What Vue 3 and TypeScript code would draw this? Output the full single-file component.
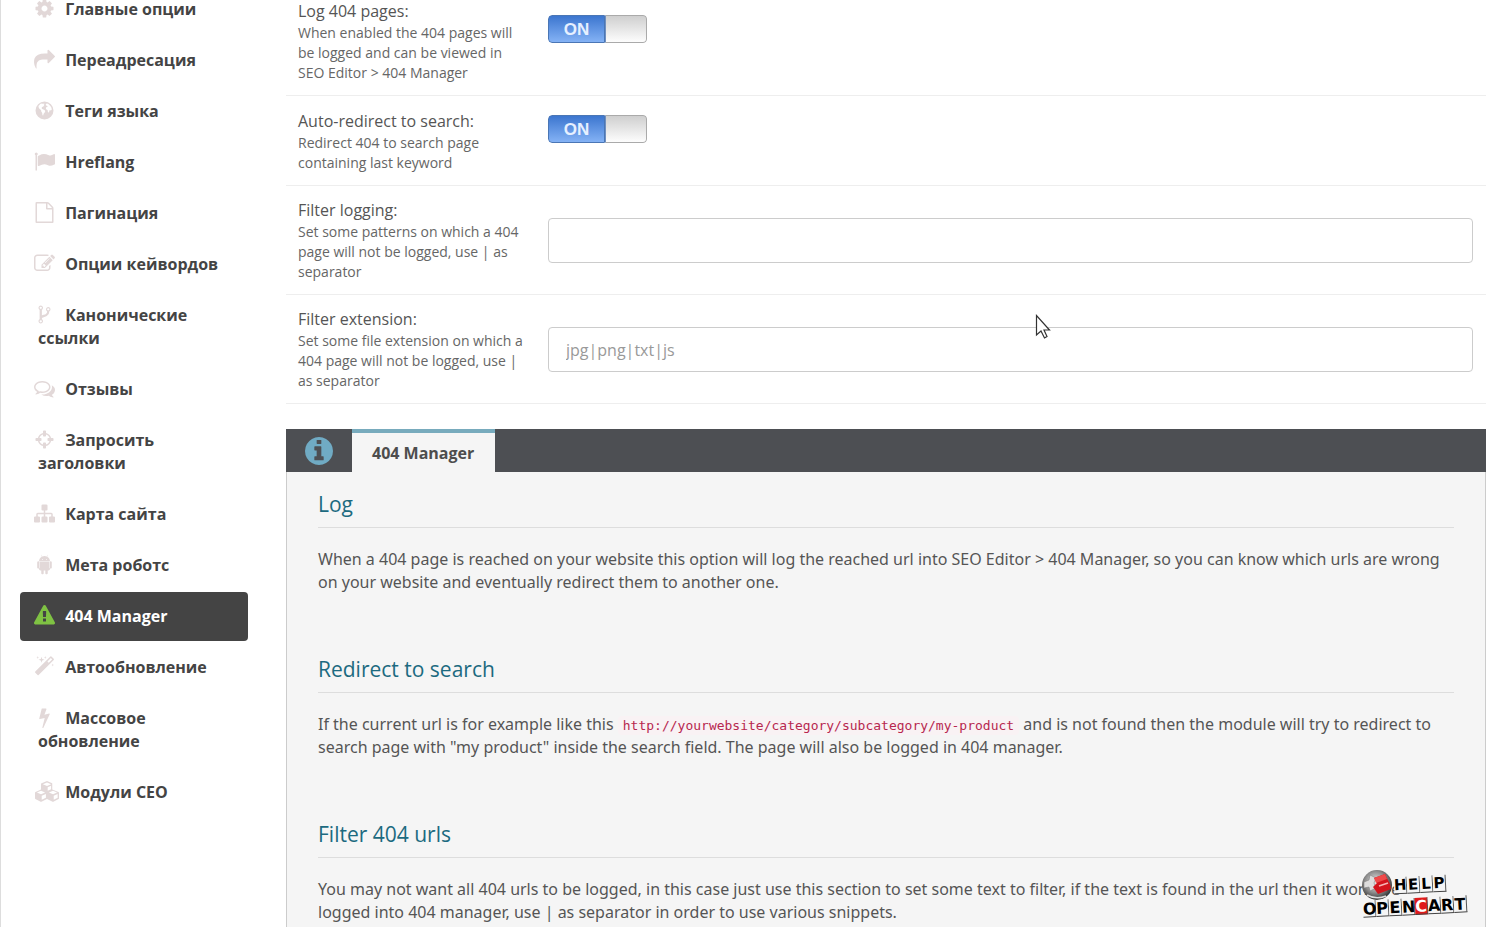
<script setup lang="ts">
import { ref } from 'vue'

interface NavItem {
  label: string
  icon: string
  wide?: boolean
  active?: boolean
}

const nav: NavItem[] = [
  { label: 'Главные опции', icon: 'M1152 896q0-106-75-181t-181-75-181 75-75 181 75 181 181 75 181-75 75-181zm512-109v222q0 12-8 23t-20 13l-185 28q-19 54-39 91 35 50 107 138 10 12 10 25t-9 23q-27 37-99 108t-94 71q-12 0-26-9l-138-108q-44 23-91 38-16 136-29 186-7 28-36 28h-222q-14 0-24.5-8.5t-11.5-21.5l-28-184q-49-16-90-37l-141 107q-10 9-25 9-14 0-25-11-126-114-165-168-7-10-7-23 0-12 8-23 15-21 51-66.5t54-70.5q-27-50-41-99l-183-27q-13-2-21-12.5t-8-23.5v-222q0-12 8-23t19-13l186-28q14-46 39-92-40-57-107-138-10-12-10-24 0-10 9-23 26-36 98.5-107.5t94.5-71.5q13 0 26 10l138 107q44-23 91-38 16-136 29-186 7-28 36-28h222q14 0 24.5 8.5t11.5 21.5l28 184q49 16 90 37l142-107q9-9 24-9 13 0 25 10 129 119 165 170 7 8 7 22 0 12-8 23-15 21-51 66.5t-54 70.5q26 50 41 98l183 28q13 2 21 12.5t8 23.5z' },
  { label: 'Переадресация', icon: 'M1792 640q0 26-19 45l-512 512q-19 19-45 19t-45-19-19-45v-256h-224q-98 0-175.5 6t-154 21.5-133 42.5-105.5 69.5-80 101-48.5 138.5-17.5 181q0 55 5 123 0 6 2.5 23.5t2.5 26.5q0 15-8.5 25t-23.5 10q-16 0-28-17-7-9-13-22t-13.5-30-10.5-24q-127-285-127-451 0-199 53-333 162-403 875-403h224v-256q0-26 19-45t45-19 45 19l512 512q19 19 19 45z' },
  { label: 'Теги языка', icon: 'M896 128a768 768 0 1 0 0 1536a768 768 0 1 0 0-1536zM560 330L700 300L760 350L850 290L900 340L820 420L880 470L790 560L700 600L640 680L700 760L800 800L900 860L960 960L900 1080L820 1180L780 1330L720 1300L700 1100L620 980L600 860L480 760L400 640L380 520zM1080 300L1200 330L1380 480L1480 640L1520 800L1440 900L1340 860L1300 980L1240 1080L1180 1000L1160 860L1060 820L1010 720L1060 600L1180 560L1120 480L1020 460L1000 380z' },
  { label: 'Hreflang', icon: 'M320 256q0 72-64 110v1266q0 13-9.5 22.5t-22.5 9.5h-64q-13 0-22.5-9.5t-9.5-22.5v-1266q-64-38-64-110 0-53 37.5-90.5t90.5-37.5 90.5 37.5 37.5 90.5zm1472 64v763q0 25-12.5 38.5t-39.5 27.5q-215 116-369 116-61 0-123.5-22t-108.5-48-115.5-48-142.5-22q-192 0-464 146-17 9-33 9-26 0-45-19t-19-45v-742q0-32 31-55 21-14 79-43 236-120 421-120 107 0 200 29t219 88q38 19 88 19 54 0 117.5-21t110-47 88-47 54.5-21q26 0 45 19t19 45z' },
  { label: 'Пагинация', icon: 'M1596 380q28 28 48 76t20 88v1152q0 40-28 68t-68 28h-1344q-40 0-68-28t-28-68v-1600q0-40 28-68t68-28h896q40 0 88 20t76 48zm-444-244v376h376q-10-29-22-41l-313-313q-12-12-41-22zm384 1528v-1024h-416q-40 0-68-28t-28-68v-416h-768v1536h1280z' },
  { label: 'Опции кейвордов', icon: 'M888 1184l116-116-152-152-116 116v56h96v96h56zm440-720q-16-16-33 1l-350 350q-17 17-1 33t33-1l350-350q17-17 1-33zm80 594v190q0 119-84.5 203.5t-203.5 84.5h-832q-119 0-203.5-84.5t-84.5-203.5v-832q0-119 84.5-203.5t203.5-84.5h832q63 0 117 25 15 7 18 23 3 17-9 29l-49 49q-14 14-32 8-23-6-45-6h-832q-66 0-113 47t-47 113v832q0 66 47 113t113 47h832q66 0 113-47t47-113v-126q0-13 9-22l64-64q15-15 35-7t20 29zm-96-738l288 288-672 672h-288v-288zm444 132l-92 92-288-288 92-92q28-28 68-28t68 28l152 152q28 28 28 68t-28 68z' },
  { label: 'Канонические ссылки', icon: 'M672 1472q0-40-28-68t-68-28-68 28-28 68 28 68 68 28 68-28 28-68zm0-1152q0-40-28-68t-68-28-68 28-28 68 28 68 68 28 68-28 28-68zm640 128q0-40-28-68t-68-28-68 28-28 68 28 68 68 28 68-28 28-68zm96 0q0 52-26 96.5t-70 69.5q-2 287-226 414-67 38-203 81-128 40-169.5 71t-41.5 100v26q44 25 70 69.5t26 96.5q0 80-56 136t-136 56-136-56-56-136q0-52 26-96.5t70-69.5v-820q-44-25-70-69.5t-26-96.5q0-80 56-136t136-56 136 56 56 136q0 52-26 96.5t-70 69.5v497q54-26 154-57 55-17 87.5-29.5t70.5-31 59-39.5 40.5-51 28-69.5 8.5-91.5q-44-25-70-69.5t-26-96.5q0-80 56-136t136-56 136 56 56 136z' },
  { label: 'Отзывы', icon: 'M704 384q-153 0-286 52t-211.5 141-78.5 191q0 82 53 158t149 132l97 56-35 84q34-20 62-39l44-31 53 10q78 14 153 14 153 0 286-52t211.5-141 78.5-191-78.5-191-211.5-141-286-52zm0-128q191 0 353.5 68.5t256.5 186.5 94 257-94 257-256.5 186.5-353.5 68.5q-86 0-176-16-124 88-278 128-36 9-86 16h-3q-11 0-20.5-8t-11.5-21q-1-3-1-6.5t.5-6.5 2-6l2.5-5t3.5-5.5 4-5 4.5-5 4-4.5q5-6 23-25t26-29.5 22.5-29 25-38.5 20.5-44q-124-72-195-177t-71-224q0-139 94-257t256.5-186.5 353.5-68.5zm822 1169q10 24 20.5 44t25 38.5 22.5 29 26 29.5 23 25q1 1 4 4.5t4.5 5 4 5 3.5 5.5l2.5 5t2 6 .5 6.5-1 6.5q-3 14-13 22t-22 7q-50-7-86-16-154-40-278-128-90 16-176 16-271 0-472-132 58 4 88 4 161 0 309-45t264-129q125-92 192-212t67-254q0-77-23-152 129 71 204 178t75 230q0 120-71 224.5t-195 176.5z' },
  { label: 'Запросить заголовки', icon: 'M1325 1024h-109q-26 0-45-19t-19-45v-128q0-26 19-45t45-19h109q-32-108-112.5-188.5t-188.5-112.5v109q0 26-19 45t-45 19h-128q-26 0-45-19t-19-45v-109q-108 32-188.5 112.5t-112.5 188.5h109q26 0 45 19t19 45v128q0 26-19 45t-45 19h-109q32 108 112.5 188.5t188.5 112.5v-109q0-26 19-45t45-19h128q26 0 45 19t19 45v109q108-32 188.5-112.5t112.5-188.5zm339-192v128q0 26-19 45t-45 19h-143q-37 161-154.5 278.5t-278.5 154.5v143q0 26-19 45t-45 19h-128q-26 0-45-19t-19-45v-143q-161-37-278.5-154.5t-154.5-278.5h-143q-26 0-45-19t-19-45v-128q0-26 19-45t45-19h143q37-161 154.5-278.5t278.5-154.5v-143q0-26 19-45t45-19h128q26 0 45 19t19 45v143q161 37 278.5 154.5t154.5 278.5h143q26 0 45 19t19 45z' },
  { label: 'Карта сайта', icon: 'M1792 1248v320q0 40-28 68t-68 28h-320q-40 0-68-28t-28-68v-320q0-40 28-68t68-28h96v-192h-512v192h96q40 0 68 28t28 68v320q0 40-28 68t-68 28h-320q-40 0-68-28t-28-68v-320q0-40 28-68t68-28h96v-192h-512v192h96q40 0 68 28t28 68v320q0 40-28 68t-68 28h-320q-40 0-68-28t-28-68v-320q0-40 28-68t68-28h96v-192q0-52 38-90t90-38h512v-192h-96q-40 0-68-28t-28-68v-320q0-40 28-68t68-28h320q40 0 68 28t28 68v320q0 40-28 68t-68 28h-96v192h512q52 0 90 38t38 90v192h96q40 0 68 28t28 68z' },
  { label: 'Мета роботс', icon: 'M717 499q16 0 27.5-11.5t11.5-27.5-11.5-27.5-27.5-11.5-27 11.5-11 27.5 11 27.5 27 11.5zm358 0q16 0 27-11.5t11-27.5-11-27.5-27-11.5-27.5 11.5-11.5 27.5 11.5 27.5 27.5 11.5zm-699 112q42 0 72 30t30 72v430q0 43-29.5 73t-72.5 30-73-30-30-73v-430q0-42 30-72t73-30zm979 19v666q0 46-32 78t-77 32h-75v227q0 43-30 73t-73 30-73-30-30-73v-227h-138v227q0 43-30 73t-73 30q-42 0-72-30t-30-73l-1-227h-74q-46 0-78-32t-32-78v-666h918zm-232-405q107 55 171 153.5t64 215.5h-925q0-117 64-215.5t172-153.5l-71-131q-7-13 5-20 13-6 20 6l72 132q95-42 201-42t201 42l72-132q7-12 20-6 12 7 5 20zm395 488v430q0 43-30 73t-73 30q-42 0-72-30t-30-73v-430q0-43 30-72.5t72-29.5q43 0 73 29.5t30 72.5z' },
  { label: '404 Manager', active: true, icon: 'M1024 1375v-190q0-14-9.5-23.5t-22.5-9.5h-192q-13 0-22.5 9.5t-9.5 23.5v190q0 14 9.5 23.5t22.5 9.5h192q13 0 22.5-9.5t9.5-23.5zm-2-374l18-459q0-12-10-19-13-11-24-11h-220q-11 0-24 11-10 7-10 21l17 457q0 10 10 16.5t24 6.5h185q14 0 23.5-6.5t10.5-16.5zm-14-934l768 1408q35 63-2 126-17 29-46.5 46t-63.5 17h-1536q-34 0-63.5-17t-46.5-46q-37-63-2-126l768-1408q17-31 47-49t65-18 65 18 47 49z' },
  { label: 'Автообновление', icon: 'M1254 581l293-293-107-107-293 293zm447-293q0 27-18 45l-1286 1286q-18 18-45 18t-45-18l-198-198q-18-18-18-45t18-45l1286-1286q18-18 45-18t45 18l198 198q18 18 18 45zm-1351-190l98 30-98 30-30 98-30-98-98-30 98-30 30-98zm350 162l196 60-196 60-60 196-60-196-196-60 196-60 60-196zm930 478l98 30-98 30-30 98-30-98-98-30 98-30 30-98zm-640-640l98 30-98 30-30 98-30-98-98-30 98-30 30-98z' },
  { label: 'Массовое обновление', icon: 'M1333 566q18 20 7 44l-540 1157q-13 25-42 25-4 0-14-2-17-5-25.5-19t-4.5-30l197-808-406 101q-4 1-12 1-18 0-31-11-18-15-13-39l201-825q4-14 16-23t28-9h328q19 0 32 12.5t13 29.5q0 8-5 18l-171 463 396-98q8-2 12-2 19 0 34 15z' },
  { label: 'Модули СЕО', wide: true, icon: 'M1152 0L1600 190V720L2130 940Q2176 960 2176 1010V1480Q2176 1520 2140 1540L1690 1770Q1664 1785 1630 1770L1152 1540L674 1770Q640 1785 610 1770L160 1540Q128 1520 128 1480V1010Q128 960 170 940L640 720V260Q640 210 690 190zM1152 130L800 280L1152 430L1504 280zM1210 540V830L1500 700V410zM640 840L290 990L640 1140L990 990zM700 1250V1600L1060 1420V1100zM1664 840L1314 990L1664 1140L2014 990zM1724 1250V1600L2060 1430V1100z' },
]

const infoIcon = 'M1152 1376v-160q0-14-9-23t-23-9h-96v-512q0-14-9-23t-23-9h-320q-14 0-23 9t-9 23v160q0 14 9 23t23 9h96v320h-96q-14 0-23 9t-9 23v160q0 14 9 23t23 9h448q14 0 23-9t9-23zm-128-896v-160q0-14-9-23t-23-9h-192q-14 0-23 9t-9 23v160q0 14 9 23t23 9h192q14 0 23-9t9-23zm640 416q0 209-103 385.5t-279.5 279.5-385.5 103-385.5-103-279.5-279.5-103-385.5 103-385.5 279.5-279.5 385.5-103 385.5 103 279.5 279.5 103 385.5z'

const logPages = ref(true)
const autoRedirect = ref(true)
const filterLogging = ref('')
const filterExtension = ref('')
</script>

<template>
  <div class="page">
    <nav class="sidebar">
      <ul>
        <li v-for="item in nav" :key="item.label">
          <a href="#" :class="{ active: item.active }">
            <svg :class="['icon', { wide: item.wide }]" :viewBox="item.wide ? '128 0 2048 1792' : '0 0 1792 1792'" aria-hidden="true">
              <path :d="item.icon" fill-rule="evenodd" />
            </svg>
            {{ item.label }}
          </a>
        </li>
      </ul>
    </nav>

    <main class="content">
      <form class="options" @submit.prevent>
        <div class="row toggle-row">
          <label for="log-pages">Log 404 pages:<small>When enabled the 404 pages will be logged and can be viewed in SEO Editor &gt; 404 Manager</small></label>
          <div class="switch">
            <input id="log-pages" v-model="logPages" type="checkbox" />
            <span class="on">ON</span><span class="handle"></span>
          </div>
        </div>
        <div class="row toggle-row">
          <label for="auto-redirect">Auto-redirect to search:<small>Redirect 404 to search page containing last keyword</small></label>
          <div class="switch">
            <input id="auto-redirect" v-model="autoRedirect" type="checkbox" />
            <span class="on">ON</span><span class="handle"></span>
          </div>
        </div>
        <div class="row">
          <label for="filter-logging">Filter logging:<small>Set some patterns on which a 404 page will not be logged, use | as separator</small></label>
          <input id="filter-logging" v-model="filterLogging" class="field" type="text" />
        </div>
        <div class="row">
          <label for="filter-extension">Filter extension:<small>Set some file extension on which a 404 page will not be logged, use | as separator</small></label>
          <input id="filter-extension" v-model="filterExtension" class="field" type="text" placeholder="jpg|png|txt|js" />
        </div>
      </form>

      <section class="info">
        <div class="tabs">
          <span class="tab-icon">
            <svg viewBox="128 128 1536 1536" aria-hidden="true"><path :d="infoIcon" /></svg>
          </span>
          <button type="button" class="tab">404 Manager</button>
        </div>
        <div class="panel">
          <article>
            <h4>Log</h4>
            <p>When a 404 page is reached on your website this option will log the reached url into SEO Editor &gt; 404 Manager, so you can know which urls are wrong on your website and eventually redirect them to another one.</p>
          </article>
          <article>
            <h4>Redirect to search</h4>
            <p>If the current url is for example like this <code>http://yourwebsite/category/subcategory/my-product</code> and is not found then the module will try to redirect to search page with "my product" inside the search field. The page will also be logged in 404 manager.</p>
          </article>
          <article>
            <h4>Filter 404 urls</h4>
            <p>You may not want all 404 urls to be logged, in this case just use this section to set some text to filter, if the text is found in the url then it won't be<br />logged into 404 manager, use | as separator in order to use various snippets.</p>
          </article>
        </div>
      </section>
    </main>

    <svg class="cursor" viewBox="0 0 16 26" aria-hidden="true">
      <path d="M1.500 1.500V21L6 17L9.500 24L12 22.500L9 16H14.500Z" fill="#fff" stroke="#333" stroke-width="1.200" />
    </svg>

    <div class="logo">
      <svg class="ball" viewBox="0 0 32 32" aria-hidden="true">
        <defs>
          <radialGradient id="ball-shade" cx="45%" cy="40%" r="60%">
            <stop offset="0" stop-color="#eee" />
            <stop offset=".6" stop-color="#8c8c8c" />
            <stop offset="1" stop-color="#333" />
          </radialGradient>
        </defs>
        <circle cx="16" cy="16" r="15" fill="url(#ball-shade)" />
        <path d="M3 13L8 11L9 6L15 9L13 14L15 19L9 22L8 18L3 19Z" fill="#ddd" stroke="#777" stroke-width=".500" />
        <path d="M13 9L24 5L29 15L30 20L17 25L12 18L16 14Z" fill="#d3141c" />
        <path d="M13 9L24 5L26 10L15 14Z" fill="#f04a4a" />
        <path d="M18 17L27 14" stroke="#f7b4b4" stroke-width="1.500" />
        <path d="M6 26Q15 31 25 27" fill="none" stroke="#ddd" stroke-width="1.500" />
      </svg>
      <div class="word help"><span v-for="(c, i) in 'HELP'" :key="i">{{ c }}</span></div>
      <div class="word cart"><span v-for="(c, i) in 'OPENCART'" :key="i" :class="{ red: i === 4 }">{{ c }}</span></div>
    </div>
  </div>
</template>

<style>
body {
  margin: 0;
  background: #fff;
}
</style>

<style scoped>
.page {
  position: relative;
  display: flex;
  gap: 38px;
  height: 100vh;
  box-sizing: border-box;
  overflow: hidden;
  padding: 0 21px 0 19px;
  border-left: 1px solid #ddd;
  font: 16px/23px "Open Sans", "Noto Sans", sans-serif;
  color: #555;
}
.sidebar {
  flex: 0 0 228px;
  margin-top: -15px;
}
.sidebar ul {
  list-style: none;
  margin: 0;
  padding: 0;
  display: flex;
  flex-direction: column;
  gap: 2px;
}
.sidebar a {
  display: block;
  padding: 13px 20px 13px 18px;
  border-radius: 4px;
  font-weight: 700;
  color: #444;
  text-decoration: none;
}
.sidebar a.active {
  background: #444;
  color: #fff;
}
.icon {
  width: 21px;
  height: 21px;
  margin: -2px 6px 0 -4px;
  vertical-align: -4px;
  fill: #e2d8d8;
}
.icon.wide {
  width: 26px;
  margin-right: 1px;
}
.active .icon {
  fill: #7fc243;
}
.content {
  flex: 1;
  min-width: 0;
  margin-top: -14px;
}
.row {
  display: grid;
  grid-template-columns: 226px 1fr;
  column-gap: 24px;
  align-items: center;
  padding: 13px 13px 12px 12px;
  border-bottom: 1px solid #eee;
}
.toggle-row {
  padding-top: 14px;
}
.row small {
  display: block;
  font-size: 14px;
  line-height: 20px;
  color: #666;
}
.field {
  box-sizing: border-box;
  width: 100%;
  height: 45px;
  padding: 0 17px;
  border: 1px solid #ccc;
  border-radius: 4px;
  background: #fff;
  font: inherit;
  color: #555;
}
.field::placeholder {
  color: #999;
  opacity: 1;
}
.switch {
  position: relative;
  display: flex;
  width: 99px;
  height: 28px;
  margin-bottom: 26px;
  border-radius: 4px;
  overflow: hidden;
  font: 700 17px/28px "Liberation Sans", Arial, sans-serif;
}
.switch input {
  position: absolute;
  inset: 0;
  width: 100%;
  height: 100%;
  margin: 0;
  opacity: 0;
}
.on {
  flex: 1;
  box-sizing: border-box;
  border: 1px solid #4a76b5;
  border-radius: 4px 0 0 4px;
  background: linear-gradient(#3c76cf, #84b2f5);
  line-height: 28px;
  text-align: center;
  color: #e6f0ff;
}
.handle {
  flex: 0 0 42px;
  box-sizing: border-box;
  border: 1px solid #aaa;
  border-left-color: #6f8fc0;
  border-radius: 0 4px 4px 0;
  background: linear-gradient(#cfcfcf, #fdfdfd);
}
.info {
  margin-top: 25px;
}
.tabs {
  display: flex;
  height: 43px;
  background: #4d4f53;
}
.tab-icon {
  display: flex;
  align-items: center;
  justify-content: center;
  width: 66px;
}
.tab-icon svg {
  width: 28px;
  height: 28px;
  fill: #70abc4;
}
.tab {
  padding: 1px 21px 0 20px;
  border: 0;
  border-top: 4px solid #78abbd;
  background: #f5f5f5;
  font: inherit;
  font-weight: 700;
  color: #4d4d4d;
}
.panel {
  padding: 20px 31px;
  border: 1px solid #ccc;
  border-top: 0;
  background: #f5f5f5;
}
.panel h4 {
  margin: 0 0 20px;
  padding-bottom: 11px;
  border-bottom: 1px solid #ddd;
  font-size: 21px;
  font-weight: 400;
  line-height: 24px;
  color: #1c6a80;
}
.panel p {
  margin: 0 0 63px;
  font-family: "Noto Sans", "Open Sans", sans-serif;
}
code {
  padding: 2px 5px;
  border-radius: 4px;
  background: #f9f2f4;
  font: 13px "DejaVu Sans Mono", monospace;
  color: #b7274f;
}
.cursor {
  position: absolute;
  left: 1034px;
  top: 314px;
  width: 16px;
  height: 26px;
}
.logo {
  position: absolute;
  right: 36px;
  bottom: 6px;
  width: 110px;
  height: 52px;
}
.ball {
  position: absolute;
  left: 0;
  top: 0;
  width: 32px;
  height: 32px;
}
.word {
  position: absolute;
  display: flex;
  font: 700 16px/17px "DejaVu Sans", sans-serif;
  color: #000;
}
.word span {
  box-sizing: border-box;
  width: 13px;
  height: 17px;
  border-right: 1px solid #555;
  border-bottom: 1px solid #444;
  background: #f5f5f5;
  text-align: center;
}
.word .red {
  background: #e01b1b;
  color: #fff;
}
.help {
  left: 33px;
  top: 7px;
  font-size: 15px;
  transform: rotate(-3deg);
}
.cart {
  left: 2px;
  top: 29px;
  transform: rotate(-3deg);
}
</style>
